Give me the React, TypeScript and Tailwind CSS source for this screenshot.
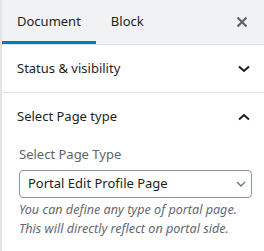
import React from "react";

const font = { fontFamily: '"Noto Sans", "Open Sans", Arial, sans-serif' };

function ChevronDown({ className = "" }: { className?: string }) {
  return (
    <svg width="12" height="8" viewBox="0 0 12 8" className={className}>
      <path d="M1 1.5 L6 6 L11 1.5" fill="none" stroke="currentColor" strokeWidth="2" />
    </svg>
  );
}

function ChevronUp({ className = "" }: { className?: string }) {
  return (
    <svg width="12" height="8" viewBox="0 0 12 8" className={className}>
      <path d="M1 6.5 L6 2 L11 6.5" fill="none" stroke="currentColor" strokeWidth="2" />
    </svg>
  );
}

export default function App() {
  return (
    <div
      className="w-[264px] h-[251px] bg-white border-l-2 border-[#e2e4e7] overflow-hidden text-[#1e1e1e]"
      style={font}
    >
      <div className="h-[45px] bg-[#f1f2f3] border-b border-[#e2e4e7] flex items-stretch">
        <div className="relative flex items-center px-[15px] text-[13px]">
          Document
          <div className="absolute left-0 right-0 bottom-0 h-[3px] bg-[#007cba]" />
        </div>
        <div className="flex items-center px-[15px] text-[13px]">Block</div>
        <div className="ml-auto flex items-center pr-[16px]">
          <svg width="12" height="12" viewBox="0 0 12 12">
            <path d="M1.5 1.5 L10.5 10.5 M10.5 1.5 L1.5 10.5" stroke="#555d66" strokeWidth="2" />
          </svg>
        </div>
      </div>

      <div className="h-[48px] border-b border-[#e2e4e7] flex items-center justify-between pl-[15px] pr-[14px] text-[13px]">
        <span>Status &amp; visibility</span>
        <ChevronDown />
      </div>

      <div>
        <div className="h-[48px] flex items-center justify-between pl-[15px] pr-[14px] text-[13px]">
          <span>Select Page type</span>
          <ChevronUp />
        </div>
        <div className="pl-[17px] pr-[12px]">
          <div className="text-[13px] text-[#5f6368] leading-[20px] mt-[3px]">Select Page Type</div>
          <div className="mt-[6px] h-[28px] border border-[#8d96a0] rounded-[4px] flex items-center justify-between pl-[8px] pr-[5px]">
            <span className="text-[13px]">Portal Edit Profile Page</span>
            <svg width="10" height="6" viewBox="0 0 10 6">
              <path d="M1 1 L5 5 L9 1" fill="none" stroke="#6c7781" strokeWidth="1.4" />
            </svg>
          </div>
          <div className="mt-[2px] text-[12.6px] italic text-[#646970] leading-[19px]">
            You can define any type of portal page.
            <br />
            This will directly reflect on portal side.
          </div>
        </div>
      </div>
    </div>
  );
}
